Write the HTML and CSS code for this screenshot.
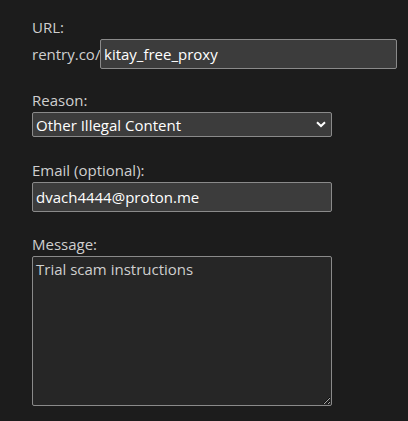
FILE: index.html
```html
<!DOCTYPE html>
<html>
<head>
<meta charset="utf-8">
<link rel="stylesheet" href="styles.css">
</head>
<body>
<form class="report">
  <div class="field">
    <label class="label">URL:</label>
    <div class="url-row">
      <span class="prefix">rentry.co/</span>
      <input class="input url-input" type="text" value="kitay_free_proxy">
    </div>
  </div>
  <div class="field">
    <label class="label">Reason:</label>
    <div class="select">
      <span class="select-text">Other Illegal Content</span>
      <svg class="chevron" width="10" height="7" viewBox="0 0 10 7"><path d="M1 1.2 L5 5 L9 1.2" fill="none" stroke="#fff" stroke-width="2"/></svg>
    </div>
  </div>
  <div class="field">
    <label class="label">Email (optional):</label>
    <input class="input email-input" type="text" value="dvach4444@proton.me">
  </div>
  <div class="field">
    <label class="label">Message:</label>
    <textarea class="message">Trial scam instructions</textarea>
  </div>
</form>
</body>
</html>
```
FILE: styles.css
```css
html, body {
  margin: 0;
  padding: 0;
  background: #1c1c1c;
}
body {
  font-family: "Open Sans", "Noto Sans", sans-serif;
  font-size: 15px;
  color: #cfcfcf;
}
.report {
  padding: 17px 0 0 32px;
  display: flex;
  flex-direction: column;
}
.field {
  display: flex;
  flex-direction: column;
  align-items: flex-start;
}
.label {
  line-height: 20px;
  height: 20px;
  margin-bottom: 2px;
}
.url-row {
  display: flex;
  align-items: center;
  margin-bottom: 21px;
}
.prefix {
  color: #cfcfcf;
  width: 68px;
}
.input {
  box-sizing: border-box;
  height: 30px;
  background: #3c3c3c;
  border: 1px solid #8a8a8a;
  border-radius: 2px;
  color: #ffffff;
  font-family: inherit;
  font-size: 15px;
  padding: 0 3px;
  outline: none;
  margin: 0;
}
.url-input { width: 297px; }
.email-input { width: 300px; margin-bottom: 22px; }
.select {
  box-sizing: border-box;
  width: 300px;
  height: 25px;
  background: #3c3c3c;
  border: 1px solid #8a8a8a;
  border-radius: 2px;
  color: #ffffff;
  display: flex;
  align-items: center;
  justify-content: space-between;
  padding: 0 5px 0 3px;
  margin-bottom: 23px;
}
.chevron { display: block; }
.message {
  box-sizing: border-box;
  width: 300px;
  height: 150px;
  background: #262626;
  border: 1px solid #8a8a8a;
  border-radius: 2px;
  color: #cfcfcf;
  font-family: inherit;
  font-size: 15px;
  padding: 2px 3px;
  margin: 0;
  resize: both;
  outline: none;
}
```
